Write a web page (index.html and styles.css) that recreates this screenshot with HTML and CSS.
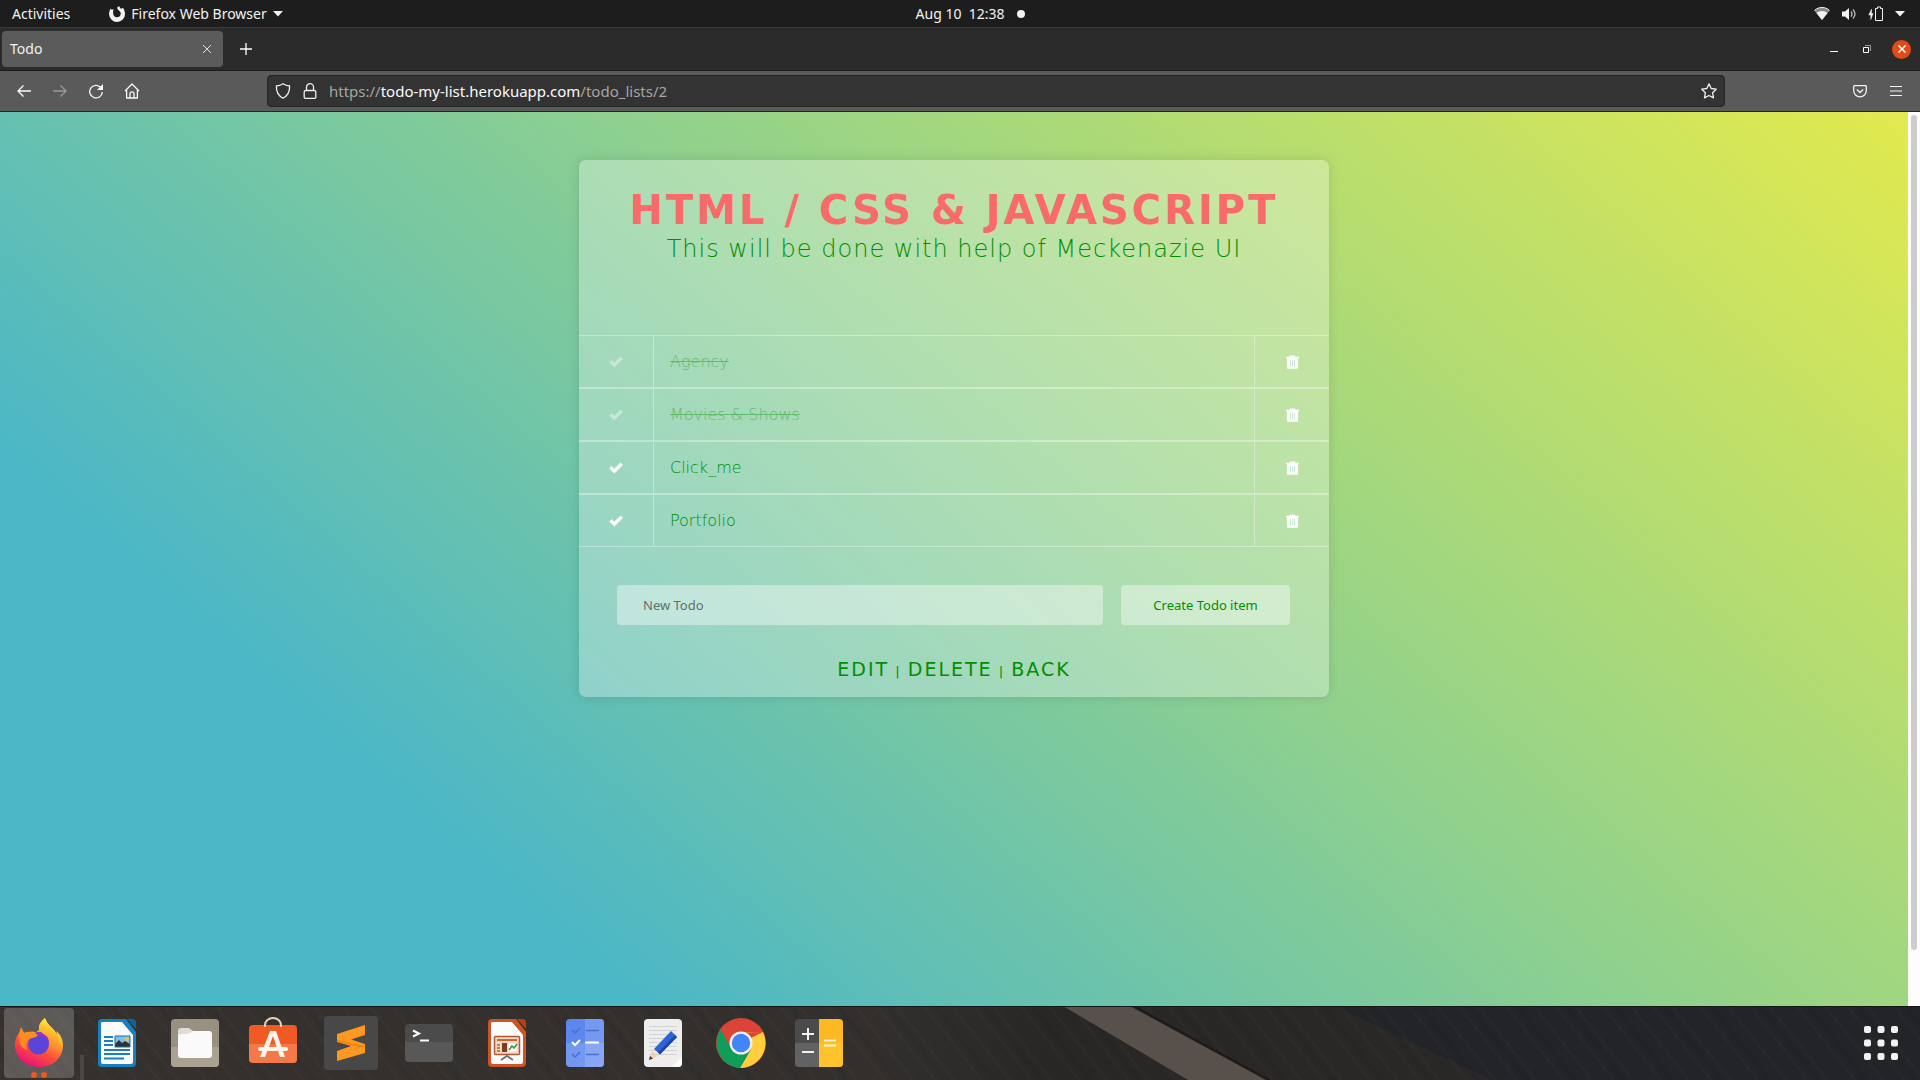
FILE: index.html
```html
<!DOCTYPE html>
<html lang="en">
<head>
<meta charset="utf-8">
<title>Todo</title>
<link rel="stylesheet" href="styles.css">
</head>
<body>
<svg width="0" height="0" class="defs" aria-hidden="true">
  <symbol id="check" viewBox="0 0 14 12"><path d="M0.6 6.4 2.6 4.4 5.4 7.1 11.6 1 13.5 3 5.4 11Z" fill="#fff" stroke="#fff" stroke-width=".8" stroke-linejoin="round"/></symbol>
  <symbol id="trash" viewBox="0 0 13 14"><path d="M3.6 1.8C3.6.8 4 .4 5 .4h3c1 0 1.400.4 1.400 1.400H13v1.400h-.9V12.500c0 .8-.5 1.300-1.300 1.300H2.200C1.400 13.800.9 13.300.9 12.500V3.200H0V1.800ZM4.800 1.800h3.400V1.400H4.800Z" fill="#fff"/><path d="M4.500 5v6.500M6.500 5v6.500M8.500 5v6.500" stroke="#b4dfc0" stroke-width=".7"/></symbol>
</svg>

<header class="topbar">
  <div class="topbar-left">
    <button class="plain">Activities</button>
    <button class="plain app-menu">
      <svg width="16" height="16" viewBox="0 0 16 16"><path d="M8.200 1.500C9 .9 9.700.5 10.200 0c.2 1.200.8 2 1.800 2.700 1.100-.1 1.700-.6 2-1 .9 1.500 2 3.700 2 6.200a7.900 7.900 0 0 1-15.900.3C0 5.900.7 3.800 2 2.400c.1.700.3 1 .6 1.300.8-.4 1.500-.4 2.300-.1C4 4.500 3.900 5.300 4.200 6c-.4 3 1 5.200 3.700 5.200 2.300 0 3.900-1.500 3.900-3.700C11.800 4.700 8 4.300 8.200 1.500Z" fill="#f2f2f2"/></svg>
      <span>Firefox Web Browser</span>
      <svg width="10" height="6" viewBox="0 0 10 6"><path d="M0 0h10L5 5.500Z" fill="#f2f2f2"/></svg>
    </button>
  </div>
  <button class="plain clock"><span>Aug 10&nbsp; 12:38</span><i class="dot"></i></button>
  <div class="tray">
    <svg width="16" height="14" viewBox="0 0 16 14"><path d="M.4 3.800C4.500-.4 11.500-.4 15.600 3.800L8 13Z" fill="#8a8a8a"/><path d="M.5 3.400C4.600-.5 11.400-.5 15.500 3.400" fill="none" stroke="#f2f2f2"/><path d="M2.500 6C5.300 3.300 10.700 3.300 13.500 6L8 13Z" fill="#f2f2f2"/></svg>
    <svg width="16" height="14" viewBox="0 0 16 14"><path d="M1 4.500h3L8 1v12L4 9.500H1Z" fill="#f2f2f2"/><path d="M10 4.500q2 2.500 0 5M12 2.500q4 4.500 0 9" fill="none" stroke="#bbb" stroke-width="1.300"/></svg>
    <svg width="16" height="16" viewBox="0 0 16 16"><path d="M3.500 3 .8 9h2v4.500L5 7.500H3.500Z" fill="#f2f2f2" stroke="#f2f2f2" stroke-width=".5"/><path d="M7.500 2.500h2V1h3v1.500h2V14.500h-7Z" fill="none" stroke="#f2f2f2"/></svg>
    <svg width="10" height="6" viewBox="0 0 10 6"><path d="M0 0h10L5 5.500Z" fill="#f2f2f2"/></svg>
  </div>
</header>

<div class="tabbar">
  <div class="tab"><span>Todo</span>
    <button class="plain" aria-label="Close tab"><svg width="10" height="10" viewBox="0 0 10 10"><path d="M1 1l8 8M9 1l-8 8" stroke="#ddd"/></svg></button>
  </div>
  <button class="plain new-tab" aria-label="New tab"><svg width="12" height="12" viewBox="0 0 12 12"><path d="M6 0v12M0 6h12" stroke="#fff" stroke-width="1.300"/></svg></button>
  <div class="window-controls">
    <button class="plain minimize" aria-label="Minimize"><svg width="8" height="8" viewBox="0 0 8 8"><path d="M0 6.500h8" stroke="#fff"/></svg></button>
    <button class="plain" aria-label="Restore"><svg width="8" height="8" viewBox="0 0 8 8"><path d="M.5 2.500h5v5h-5Z" fill="none" stroke="#fff"/><path d="M2 .5h5.500V6" fill="none" stroke="#999"/></svg></button>
    <button class="plain close" aria-label="Close"><svg width="8" height="8" viewBox="0 0 8 8"><path d="M.5.5l7 7M7.500.5l-7 7" stroke="#fff" stroke-width="1.500"/></svg></button>
  </div>
</div>

<nav class="toolbar">
  <div class="nav-buttons">
    <button class="plain" aria-label="Back"><svg width="16" height="16" viewBox="0 0 16 16"><path d="M15 8H2M7.500 2.500 2 8l5.500 5.500" fill="none" stroke="#fbfbfb" stroke-width="1.300"/></svg></button>
    <button class="plain" aria-label="Forward"><svg width="16" height="16" viewBox="0 0 16 16"><path d="M1 8h13M8.500 2.500 14 8l-5.500 5.500" fill="none" stroke="#999" stroke-width="1.300"/></svg></button>
    <button class="plain" aria-label="Reload"><svg width="16" height="16" viewBox="0 0 16 16"><path d="M13.300 5.200A6.300 6.300 0 1 0 14.300 9" fill="none" stroke="#fbfbfb" stroke-width="1.300"/><path d="M15 1v6H9Z" fill="#fbfbfb"/></svg></button>
    <button class="plain" aria-label="Home"><svg width="16" height="16" viewBox="0 0 16 16"><path d="M1 8 8 1l7 7M2.600 7v8h10.800V7M6 15v-4.200a2 2 0 0 1 4 0V15" fill="none" stroke="#fbfbfb" stroke-width="1.300" stroke-linejoin="round"/></svg></button>
  </div>
  <div class="urlbar">
    <svg width="16" height="16" viewBox="0 0 16 16"><path d="M8 .8C10 2.200 12.500 2.800 14.600 3c.3 5.500-1.600 9.500-6.600 12.200C3 12.500 1.100 8.500 1.400 3 3.500 2.800 6 2.200 8 .8Z" fill="none" stroke="#eee" stroke-width="1.300"/></svg>
    <svg width="14" height="16" viewBox="0 0 14 16"><path d="M2.700 7.500h8.600a1.500 1.500 0 0 1 1.500 1.500v5a1.500 1.500 0 0 1-1.500 1.500H2.700A1.500 1.500 0 0 1 1.200 14V9a1.500 1.500 0 0 1 1.500-1.500ZM3.500 7.500V4.200a3.500 3.500 0 0 1 7 0v3.300" fill="none" stroke="#eee" stroke-width="1.300"/></svg>
    <p class="url">https://<b>todo-my-list.herokuapp.com</b>/todo_lists/2</p>
    <svg width="16" height="16" viewBox="0 0 16 16"><path d="M8 .9l2.200 4.600 5 .7-3.600 3.500.9 5.200L8 12.500l-4.500 2.400.9-5.200L.8 6.200l5-.7Z" fill="none" stroke="#eee" stroke-width="1.300" stroke-linejoin="round"/></svg>
  </div>
  <div class="toolbar-end">
    <button class="plain" aria-label="Pocket"><svg width="14" height="14" viewBox="0 0 14 14"><path d="M1.500 1.700h11a.8.8 0 0 1 .8.8V6.500a6.300 6.300 0 0 1-12.600 0V2.500a.8.8 0 0 1 .8-.8ZM3.800 5.500 7 8.500l3.200-3" fill="none" stroke="#f2f2f2" stroke-width="1.300"/></svg></button>
    <button class="plain" aria-label="Menu"><svg width="12" height="12" viewBox="0 0 12 12"><path d="M0 1.500h12M0 6h12M0 10.500h12" stroke="#f2f2f2" stroke-width="1.200"/></svg></button>
  </div>
</nav>

<div class="viewport">
  <main class="page">
    <section class="card">
      <h1>HTML / CSS &amp; JAVASCRIPT</h1>
      <p class="subtitle">This will be done with help of Meckenazie UI</p>
      <ul class="todos">
        <li class="todo done"><button class="plain mark" aria-label="Complete Agency"><svg width="14" height="12"><use href="#check"/></svg></button><span class="name">Agency</span><button class="plain remove" aria-label="Delete Agency"><svg width="13" height="14"><use href="#trash"/></svg></button></li>
        <li class="todo done"><button class="plain mark" aria-label="Complete Movies &amp; Shows"><svg width="14" height="12"><use href="#check"/></svg></button><span class="name">Movies &amp; Shows</span><button class="plain remove" aria-label="Delete Movies &amp; Shows"><svg width="13" height="14"><use href="#trash"/></svg></button></li>
        <li class="todo"><button class="plain mark" aria-label="Complete Click_me"><svg width="14" height="12"><use href="#check"/></svg></button><span class="name">Click_me</span><button class="plain remove" aria-label="Delete Click_me"><svg width="13" height="14"><use href="#trash"/></svg></button></li>
        <li class="todo"><button class="plain mark" aria-label="Complete Portfolio"><svg width="14" height="12"><use href="#check"/></svg></button><span class="name">Portfolio</span><button class="plain remove" aria-label="Delete Portfolio"><svg width="13" height="14"><use href="#trash"/></svg></button></li>
      </ul>
      <form class="new-todo">
        <input type="text" placeholder="New Todo" aria-label="New Todo">
        <button type="button">Create Todo item</button>
      </form>
      <p class="links"><a href="#edit">EDIT</a> | <a href="#delete">DELETE</a> | <a href="#back">BACK</a></p>
    </section>
  </main>
  <div class="scrollbar"><div class="thumb"></div></div>
</div>

<footer class="dock">
  <svg class="wood" viewBox="0 0 1920 74" preserveAspectRatio="none" aria-hidden="true">
    <defs><linearGradient id="w"><stop offset="0" stop-color="#35312e"/><stop offset=".45" stop-color="#322f2d"/><stop offset=".55" stop-color="#292725"/><stop offset="1" stop-color="#2b2a29"/></linearGradient>
    <pattern id="grain" width="97" height="74" patternUnits="userSpaceOnUse" patternTransform="skewX(38)"><path d="M4 0v74M23 0v74M51 0v74M79 0v74" stroke="#fff" stroke-opacity=".015" stroke-width="4"/><path d="M14 0v74M62 0v74" stroke="#000" stroke-opacity=".05" stroke-width="5"/></pattern></defs>
    <path d="M0 0h1920v74H0Z" fill="url(#w)"/>
    <path d="M1335 0h585v74H1492Z" fill="#222427"/>
    <path d="M0 0h1920v74H0Z" fill="url(#grain)"/>
    <path d="M1130 0l6 0 135 74h-6Z" fill="#1c1c1c"/>
    <path d="M1063 0h67l136 74h-78Z" fill="#57504b"/>
    <path d="M80 49h4v25h-4Z" fill="#4a4642"/>
    <path d="M0 .5h1920" stroke="#161616"/>
  </svg>
  <div class="apps">
    <button class="plain app active" aria-label="Firefox">
      <svg width="48" height="50" viewBox="0 0 48 50">
        <defs><linearGradient id="f1" x1=".8" y1="0" x2=".3" y2="1"><stop offset="0" stop-color="#fff44f"/><stop offset=".35" stop-color="#ffb02e"/><stop offset=".65" stop-color="#ff5038"/><stop offset="1" stop-color="#e5107c"/></linearGradient><linearGradient id="f2" x1=".7" y1="0" x2=".5" y2="1"><stop offset="0" stop-color="#fff24a"/><stop offset=".5" stop-color="#ffa92b"/><stop offset="1" stop-color="#ff5a3c" stop-opacity="0"/></linearGradient></defs>
        <path d="M30 0c1 4 4 7 7 10 2 2 4 4 4.500 6.500.2-1 .2-2-.2-3.500C46 17 48 22 48 27c0 13-10 22-24 22S0 39 0 27c0-6 1.800-9 4.500-13L6 9.500 9 15l4-1c3-.5 5-1 7.500.5L24 12c-.5-5 2-9 6-12Z" fill="url(#f1)"/>
        <circle cx="23.500" cy="26" r="10.500" fill="#5b45d8"/>
        <path d="M20 15c8-4 15 3 14 10-2-4-6-7-11-7Z" fill="#8d35d0"/>
        <path d="M30 0c1 4 4 7 7 10 6 5 8 13 4 20-3 6-10 9-15 7 8-2 10-10 7-17-2-4-9-5-9-10 0-4 3-7 6-10Z" fill="url(#f2)"/>
        <path d="M6 9.500 9 15c4-2 9-1 14 2-1 2-4 3-6 3-3 1-4 2-5 4s-1 5 0 8C5 30 2 22 6 9.500Z" fill="#ff8a22"/>
      </svg>
      <span class="running"><i></i><i></i></span>
    </button>
    <button class="plain app" aria-label="LibreOffice Writer">
      <svg width="38" height="48" viewBox="0 0 38 48"><path d="M4 0h24l10 13v31a4 4 0 0 1-4 4H4a4 4 0 0 1-4-4V4a4 4 0 0 1 4-4Z" fill="#1a80bd"/><path d="M29 0h5a4 4 0 0 1 4 4v6Z" fill="#0e6599"/><path d="M4 3h20l11 13v27a2 2 0 0 1-2 2H5a2 2 0 0 1-2-2V4Z" fill="#fbfbfb"/><path d="M6 18h9M6 22h9M6 26h9M6 31h26M6 35h26M6 39.500h20" stroke="#1a80bd" stroke-width="2"/><path d="M17 17h15v11H17Z" fill="#7dc0ea"/><path d="M17 28v-3l4-4 3 3 3-2 5 3v3Z" fill="#333"/><path d="M17 17h15v11H17Z" fill="none" stroke="#1a6fa5"/><circle cx="29" cy="20" r="2" fill="#f2c335"/></svg>
    </button>
    <button class="plain app" aria-label="Files">
      <svg width="48" height="48" viewBox="0 0 48 48"><rect width="48" height="48" rx="4" fill="#989080"/><path d="M0 28h48v16a4 4 0 0 1-4 4H4a4 4 0 0 1-4-4Z" fill="#aaa291"/><path d="M7 12a3 3 0 0 1 3-3h7c3 0 3 3 6 3v8H7Z" fill="#dfdcd2"/><path d="M7 18c0-2 1-3 3-3h6c4 0 4-3 7-3h15a3 3 0 0 1 3 3v21a3 3 0 0 1-3 3H10a3 3 0 0 1-3-3Z" fill="#fafafa"/></svg>
    </button>
    <button class="plain app" aria-label="Ubuntu Software">
      <svg width="48" height="56" viewBox="0 0 48 56"><rect y="10" width="48" height="38" rx="4" fill="#f15a22"/><path d="M0 29h48v15a4 4 0 0 1-4 4H4a4 4 0 0 1-4-4Z" fill="#f37a48"/><path d="M16 12V10a8 7 0 0 1 16 0v2" fill="none" stroke="#ead3ae" stroke-width="2"/><path d="M21 16h6l9 26h-5L24 21l-8 21h-5Z" fill="#fff3ea"/><rect x="9" y="32" width="30" height="4" rx="2" fill="#fff3ea"/></svg>
    </button>
    <button class="plain app" aria-label="Sublime Text">
      <svg width="54" height="54" viewBox="0 0 54 54"><rect width="54" height="54" rx="4" fill="#484848"/><path d="M13 18 41 9v10L27 23.500 41 28v9L13 45V35l14-5-14-4Z" fill="#ff9820"/><path d="M13 26v-2l28 6-14 4 8-3Z" fill="#de7b10" opacity=".6"/></svg>
    </button>
    <button class="plain app" aria-label="Terminal">
      <svg width="48" height="38" viewBox="0 0 48 38"><rect width="48" height="38" rx="4" fill="#4b4b4b"/><path d="M0 18h48v16a4 4 0 0 1-4 4H4a4 4 0 0 1-4-4Z" fill="#585858"/><path d="M8 6.500l6 3-6 3M15 16.500h9" fill="none" stroke="#fff" stroke-width="2"/></svg>
    </button>
    <button class="plain app" aria-label="LibreOffice Impress">
      <svg width="38" height="48" viewBox="0 0 38 48"><path d="M4 0h24l10 13v31a4 4 0 0 1-4 4H4a4 4 0 0 1-4-4V4a4 4 0 0 1 4-4Z" fill="#cc5425"/><path d="M29 0h5a4 4 0 0 1 4 4v6Z" fill="#b54113"/><path d="M4 3h20l11 13v27a2 2 0 0 1-2 2H5a2 2 0 0 1-2-2V4Z" fill="#fbfbfb"/><rect x="6.500" y="17.500" width="25" height="18" rx="1" fill="#f3d7c7" stroke="#b05a35" stroke-width="1.500"/><path d="M9 21h20" stroke="#d3622f" stroke-width="2"/><path d="M14 24h5v9h-5Z" fill="#7c3d22"/><path d="M9 26h3M9 29h3M9 32h3" stroke="#c45a2d" stroke-width="1.500"/><path d="M20.500 24.500h8v8h-8Z" fill="#fff"/><path d="M21 31l3-4 2 2 3-4" fill="none" stroke="#2b9a3f" stroke-width="1.500"/><path d="M13 41l6-4 6 4" fill="none" stroke="#777" stroke-width="2"/></svg>
    </button>
    <button class="plain app" aria-label="To Do">
      <svg width="38" height="48" viewBox="0 0 38 48"><rect width="38" height="48" rx="4" fill="#5c87ee"/><path d="M19 0h15a4 4 0 0 1 4 4v40a4 4 0 0 1-4 4H19Z" fill="#7598f1"/><path d="M0 24h38v20a4 4 0 0 1-4 4H4a4 4 0 0 1-4-4Z" fill="#fff" opacity=".14"/><path d="M6 11l3 3 5-5M6 35l3 3 5-5M20 11.500h13M20 35.500h13" fill="none" stroke="#4a6fcd" stroke-width="1.500"/><path d="M6 23l3 3 5-5M19 23.500h14" fill="none" stroke="#fff" stroke-width="2"/></svg>
    </button>
    <button class="plain app" aria-label="Text Editor">
      <svg width="38" height="48" viewBox="0 0 38 48"><rect width="38" height="48" rx="4" fill="#ededed"/><path d="M5 7.500h28M5 11.500h28M5 15.500h28M5 19.500h28M5 23.500h28M5 27.500h28M5 31.500h28M5 35.500h28" stroke="#d2d2d2"/><path d="M27 48l11-10v6a4 4 0 0 1-4 4Z" fill="#fafafa"/><path d="M5 41l3-9 6 5Z" fill="#f6d2ac"/><path d="M5 41l1-4 3 2.500Z" fill="#3a3a3a"/><path d="M10 30 27 12l6 6-17 17.500Z" fill="#2d65d2"/><path d="M14 33.500 31 16l2 2-17 17.500Z" fill="#1c47a8"/></svg>
    </button>
    <button class="plain app" aria-label="Google Chrome">
      <svg width="50" height="50" viewBox="0 0 50 50"><circle cx="25" cy="25" r="25" fill="#db4437"/><path d="M25 25 46.900 14H25ZM46.900 14A25 25 0 0 1 24 50L35 31 25 14.500Z" fill="#ffcd40"/><path d="M4.600 11.500 15.500 31 35 31 24 50A25 25 0 0 1 4.600 11.500Z" fill="#0f9d58"/><circle cx="25" cy="25" r="11.500" fill="#f1f1f1"/><circle cx="25" cy="25" r="9.200" fill="#4285f4"/></svg>
    </button>
    <button class="plain app" aria-label="Calculator">
      <svg width="48" height="48" viewBox="0 0 48 48"><rect width="48" height="48" rx="4" fill="#4b4b4b"/><path d="M0 24h24v24H4a4 4 0 0 1-4-4Z" fill="#626262"/><path d="M24 0h20a4 4 0 0 1 4 4v40a4 4 0 0 1-4 4H24Z" fill="#fdb924"/><path d="M24 24h24v20a4 4 0 0 1-4 4H24Z" fill="#fec22e"/><path d="M7 15h12M13 9v12M7 33h12" stroke="#f2f2f2" stroke-width="2"/><path d="M29 21.500h12M29 26.500h12" stroke="#fff3cf" stroke-width="2"/></svg>
    </button>
  </div>
  <button class="plain grid-button" aria-label="Show Applications">
    <svg width="34" height="34" viewBox="0 0 34 34" fill="#f2f2f2"><rect width="7" height="7" rx="2"/><rect x="13.500" width="7" height="7" rx="2"/><rect x="27" width="7" height="7" rx="2"/><rect y="13.500" width="7" height="7" rx="2"/><rect x="13.500" y="13.500" width="7" height="7" rx="2"/><rect x="27" y="13.500" width="7" height="7" rx="2"/><rect y="27" width="7" height="7" rx="2"/><rect x="13.500" y="27" width="7" height="7" rx="2"/><rect x="27" y="27" width="7" height="7" rx="2"/></svg>
  </button>
</footer>
</body>
</html>
```
FILE: styles.css
```css
* { box-sizing: border-box; }

body {
  margin: 0;
  min-height: 100vh;
  display: flex;
  flex-direction: column;
  font-family: "Noto Sans", "Open Sans", sans-serif;
  font-size: 14px;
  line-height: 20px;
  color: #f2f2f2;
  background: #222;
}

p, h1, ul { margin: 0; padding: 0; }
svg { display: block; flex: none; }
.defs { position: absolute; }

.plain {
  display: flex;
  align-items: center;
  padding: 0;
  border: 0;
  background: none;
  color: inherit;
  font: inherit;
}

/* Desktop top bar */
.topbar {
  display: grid;
  grid-template-columns: 1fr auto 1fr;
  align-items: center;
  height: 28px;
  padding: 0 15px 0 12px;
  background: #1d1d1d;
  border-bottom: 1px solid #3a3a3a;
}
.topbar-left { display: flex; gap: 39px; }
.app-menu { gap: 6px; }
.clock { gap: 13px; padding-left: 24px; }
.dot { width: 8px; height: 8px; border-radius: 50%; background: #f2f2f2; }
.tray { display: flex; justify-content: flex-end; align-items: center; gap: 11px; }

/* Browser chrome */
.tabbar {
  display: flex;
  align-items: center;
  height: 43px;
  padding: 0 9px 0 2px;
  background: #2b2b2b;
  border-bottom: 1px solid #1b1b1b;
}
.tab {
  display: flex;
  align-items: center;
  justify-content: space-between;
  width: 221px;
  height: 36px;
  padding: 0 11px 0 8px;
  border-radius: 4px;
  background: #5b5b5b;
}
.new-tab { margin-left: 17px; }
.window-controls { display: flex; align-items: center; gap: 21px; margin-left: auto; }
.window-controls .minimize { margin-right: 4px; }
.window-controls .close {
  justify-content: center;
  width: 19px;
  height: 19px;
  border-radius: 50%;
  background: #e24a17;
}
.toolbar {
  display: flex;
  align-items: center;
  height: 41px;
  padding: 0 18px 0 16px;
  background: #5a5a5a;
  border-bottom: 1px solid #262626;
}
.nav-buttons { display: flex; flex: 0 0 251px; gap: 20px; }
.urlbar {
  display: flex;
  flex: 1;
  align-items: center;
  gap: 12px;
  height: 32px;
  padding: 0 7px;
  border: 1px solid #222;
  border-radius: 4px;
  background: #333;
}
.url { flex: 1; font-size: 15px; color: #a5a5a5; }
.url b { font-weight: 400; color: #fbfbfb; }
.toolbar-end { display: flex; flex: 0 0 177px; justify-content: flex-end; gap: 23px; }

/* Web page */
.viewport { display: flex; flex: 1; }
.page {
  flex: 1;
  padding: 48px 16px;
  background: linear-gradient(41deg, #4cb7c6 22%, #96d388 60%, #e2ea4e 100%);
  font-family: "DejaVu Sans", sans-serif;
  color: #008f00;
}
.scrollbar { flex: 0 0 12px; padding: 3px; background: #fdfdfd; }
.thumb { height: 94%; border-radius: 3px; background: #cdcdcd; }

.card {
  max-width: 750px;
  margin: 0 auto;
  padding: 27px 0 13px;
  border-radius: 7px;
  background: rgba(255, 255, 255, 0.3);
  box-shadow: 0 0 12px rgba(0, 0, 0, 0.12);
  text-align: center;
}
.card h1 {
  font-size: 40px;
  line-height: 47px;
  letter-spacing: 3px;
  color: #f96a6a;
}
.subtitle {
  font-size: 24px;
  font-weight: 200;
  line-height: 30px;
  letter-spacing: 1px;
}
.todos { margin-top: 71px; list-style: none; }
.todo {
  display: flex;
  height: 53px;
  border: solid rgba(255, 255, 255, 0.35);
  border-width: 1px 0;
}
.mark, .remove { flex: 0 0 75px; justify-content: center; }
.mark { border-right: 1px solid rgba(255, 255, 255, 0.35); }
.remove { border-left: 1px solid rgba(255, 255, 255, 0.35); }
.name {
  flex: 1;
  padding-left: 16px;
  font-size: 16px;
  font-weight: 200;
  line-height: 51px;
  text-align: left;
}
.done .name { opacity: 0.4; text-decoration: line-through; }
.done .mark svg { opacity: 0.4; }

.new-todo { display: flex; gap: 18px; padding: 38px 39px 0 38px; }
.new-todo input, .new-todo button {
  height: 40px;
  border: 0;
  border-radius: 4px;
  background: rgba(255, 255, 255, 0.4);
  font-family: "Noto Sans", "Open Sans", sans-serif;
  font-size: 13px;
}
.new-todo input { flex: 1; padding: 0 26px; }
.new-todo input::placeholder { color: #5d7169; }
.new-todo button { flex: 0 0 169px; color: #008f00; }
.links {
  margin-top: 32px;
  font-size: 13px;
  line-height: 24px;
  letter-spacing: 2px;
}
.links a {
  color: inherit;
  font-size: 19px;
  text-decoration: none;
}

/* Dock */
.dock {
  position: relative;
  display: flex;
  justify-content: space-between;
  height: 74px;
  padding-right: 22px;
}
.wood { position: absolute; inset: 0; width: 100%; height: 100%; }
.apps { display: flex; align-items: center; gap: 8px; padding-left: 4px; }
.app {
  position: relative;
  justify-content: center;
  width: 70px;
  height: 70px;
  border-radius: 4px;
}
.app.active { background: rgba(255, 255, 255, 0.2); }
.running {
  position: absolute;
  bottom: 0;
  display: flex;
  gap: 4px;
}
.running i { width: 6px; height: 6px; border-radius: 50%; background: #ee5622; }
.grid-button { position: relative; }
```
